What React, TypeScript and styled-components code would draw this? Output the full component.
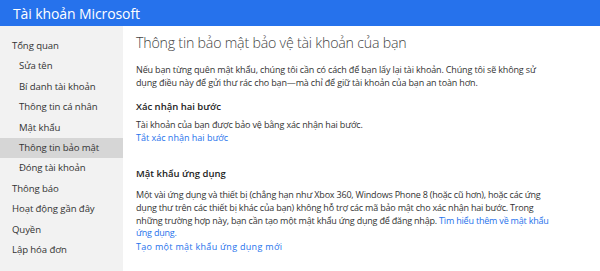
import React from "react";
import styled, { createGlobalStyle } from "styled-components";

const GlobalStyle = createGlobalStyle`
  html, body {
    margin: 0;
    padding: 0;
    background: #ffffff;
  }
  body {
    font-family: "Open Sans", "Noto Sans", "Liberation Sans", sans-serif;
    color: #333333;
  }
`;

const menu = [
  { label: "Tổng quan", sub: false },
  { label: "Sửa tên", sub: true },
  { label: "Bí danh tài khoản", sub: true },
  { label: "Thông tin cá nhân", sub: true },
  { label: "Mật khẩu", sub: true },
  { label: "Thông tin bảo mật", sub: true, active: true },
  { label: "Đóng tài khoản", sub: true },
  { label: "Thông báo", sub: false },
  { label: "Hoạt động gần đây", sub: false },
  { label: "Quyền", sub: false },
  { label: "Lập hóa đơn", sub: false },
];

export default function App() {
  return (
    <>
      <GlobalStyle />
      <Page>
        <Header>
          <Brand>Tài khoản Microsoft</Brand>
        </Header>
        <Body>
          <Sidebar>
            {menu.map((m) => (
              <NavItem key={m.label} $sub={m.sub} $active={!!m.active}>
                {m.label}
              </NavItem>
            ))}
          </Sidebar>
          <Main>
            <Title>Thông tin bảo mật bảo vệ tài khoản của bạn</Title>
            <Text>
              Nếu bạn từng quên mật khẩu, chúng tôi cần có cách để bạn lấy lại tài khoản. Chúng tôi sẽ không sử
              <br />
              dụng điều này để gửi thư rác cho bạn—mà chỉ để giữ tài khoản của bạn an toàn hơn.
            </Text>

            <Section>
              <SectionTitle>Xác nhận hai bước</SectionTitle>
              <Text>Tài khoản của bạn được bảo vệ bằng xác nhận hai bước.</Text>
              <SmallLink href="#">Tắt xác nhận hai bước</SmallLink>
            </Section>

            <Section $gap={22}>
              <SectionTitle $space={8}>Mật khẩu ứng dụng</SectionTitle>
              <Text $tight>
                Một vài ứng dụng và thiết bị (chẳng hạn như Xbox 360, Windows Phone 8 (hoặc cũ hơn), hoặc các ứng
                <br />
                dụng thư trên các thiết bị khác của bạn) không hỗ trợ các mã bảo mật cho xác nhận hai bước. Trong
                <br />
                những trường hợp này, bạn cần tạo một mật khẩu ứng dụng để đăng nhập.{" "}
                <InlineLink href="#">
                  Tìm hiểu thêm về mật khẩu
                  <br />
                  ứng dụng.
                </InlineLink>
              </Text>
              <SmallLink href="#" $wide>
                Tạo một mật khẩu ứng dụng mới
              </SmallLink>
            </Section>
          </Main>
        </Body>
      </Page>
    </>
  );
}

const Page = styled.div`
  width: 600px;
  height: 271px;
  overflow: hidden;
  display: flex;
  flex-direction: column;
`;

const Header = styled.header`
  height: 26px;
  flex: none;
  background: #2672ec;
  display: flex;
  align-items: center;
  padding-left: 13px;
`;

const Brand = styled.div`
  color: #ffffff;
  font-size: 14px;
  letter-spacing: -0.1px;
`;

const Body = styled.div`
  flex: 1;
  display: flex;
`;

const Sidebar = styled.nav`
  width: 123px;
  flex: none;
  background: #f2f2f2;
  padding-top: 10px;
  display: flex;
  flex-direction: column;
`;

const NavItem = styled.div<{ $sub: boolean; $active: boolean }>`
  height: 20.4px;
  line-height: 20.4px;
  padding-left: ${(p) => (p.$sub ? 19 : 12)}px;
  font-size: 9.6px;
  letter-spacing: -0.1px;
  color: #333333;
  white-space: nowrap;
  background: ${(p) => (p.$active ? "#d6d6d6" : "transparent")};
`;

const Main = styled.main`
  flex: 1;
  padding: 6px 10px 0 13px;
`;

const Title = styled.h1`
  margin: 0 0 9px;
  font-size: 14.2px;
  font-weight: 300;
  color: #444444;
  line-height: 22px;
  letter-spacing: -0.2px;
`;

const Text = styled.p<{ $tight?: boolean }>`
  margin: 0;
  font-size: 9px;
  letter-spacing: ${(p) => (p.$tight ? -0.2 : -0.15)}px;
  line-height: ${(p) => (p.$tight ? 12.8 : 13)}px;
  color: #333333;
  white-space: nowrap;
`;

const Section = styled.section<{ $gap?: number }>`
  margin-top: ${(p) => p.$gap ?? 11}px;
`;

const SectionTitle = styled.h2<{ $space?: number }>`
  margin: 0 0 ${(p) => p.$space ?? 4}px;
  font-size: 9.5px;
  font-weight: 600;
  color: #222222;
  line-height: 14px;
`;

const InlineLink = styled.a`
  color: #2672ec;
  text-decoration: none;
`;

const SmallLink = styled.a<{ $wide?: boolean }>`
  display: block;
  font-size: 9px;
  letter-spacing: ${(p) => (p.$wide ? 0.3 : 0)}px;
  line-height: 14px;
  color: #2672ec;
  text-decoration: none;
`;
